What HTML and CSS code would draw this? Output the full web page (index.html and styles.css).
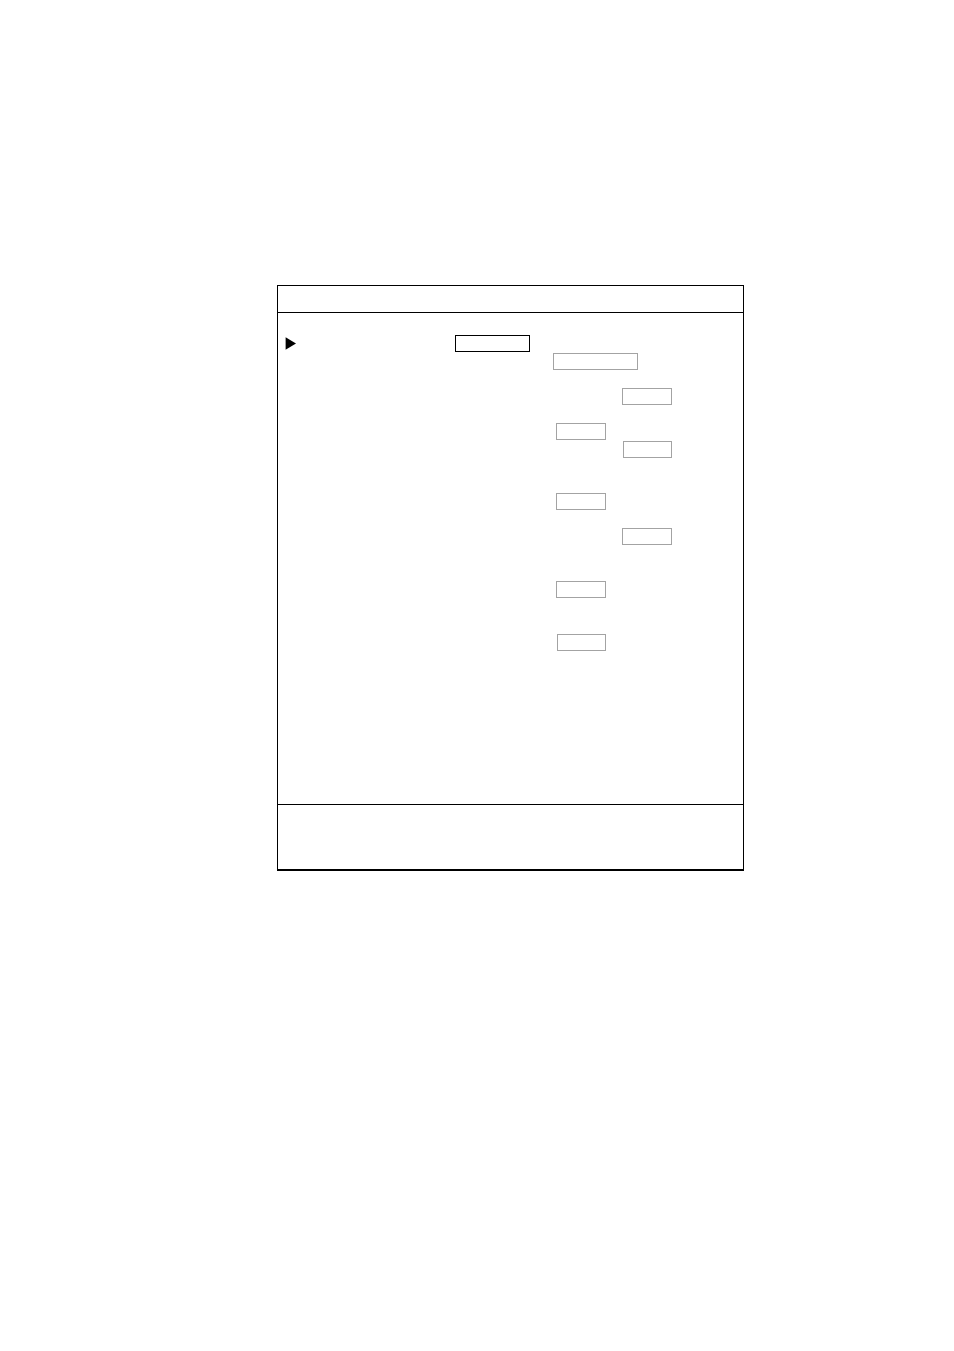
FILE: index.html
```html
<!DOCTYPE html>
<html lang="en">
<head>
<meta charset="utf-8">
<meta name="viewport" content="width=device-width, initial-scale=1">
<title>Menu</title>
<link rel="stylesheet" href="styles.css">
</head>
<body>
<main class="page">
  <form class="panel">
    <header class="panel-header"></header>
    <div class="panel-body">
      <div class="row row-active">
        <svg class="cursor" viewBox="0 0 12 13" aria-hidden="true"><path d="M0.6 0.3 L11 6.5 L0.6 12.7 Z"/></svg>
        <input class="field field-active" type="text" aria-label="Field 1">
      </div>
      <div class="row row-wide gap-tight"><input class="field" type="text" aria-label="Field 2"></div>
      <div class="row gap-line"><input class="field field-outer" type="text" aria-label="Field 3"></div>
      <div class="row gap-line"><input class="field field-inner" type="text" aria-label="Field 4"></div>
      <div class="row gap-tight"><input class="field field-outer field-short" type="text" aria-label="Field 5"></div>
      <div class="row gap-double"><input class="field field-inner" type="text" aria-label="Field 6"></div>
      <div class="row gap-line"><input class="field field-outer" type="text" aria-label="Field 7"></div>
      <div class="row gap-section"><input class="field field-inner" type="text" aria-label="Field 8"></div>
      <div class="row gap-section"><input class="field field-inner field-short" type="text" aria-label="Field 9"></div>
    </div>
    <footer class="panel-footer"></footer>
  </form>
</main>
</body>
</html>
```
FILE: styles.css
```css
* {
  box-sizing: border-box;
}

body {
  margin: 0;
  background: #fff;
  font-family: "Liberation Sans", Arial, sans-serif;
  font-size: 12px;
}

.page {
  padding: 285px 210px 285px 277px;
}

.panel {
  border: 1px solid #000;
  border-bottom-width: 2px;
}

.panel-header {
  min-height: 27px;
  border-bottom: 1px solid #000;
}

.panel-body {
  padding: 22px 0 153px;
}

.panel-footer {
  min-height: 65px;
  border-top: 1px solid #000;
}

.row {
  display: grid;
  grid-template-columns: 278px 50px 16px 50px;
  min-height: 17px;
}

.row-active {
  grid-template-columns: 12px 75px;
  column-gap: 158px;
  padding-left: 7px;
  align-items: center;
}

.row-wide {
  grid-template-columns: 85px;
  padding-left: 275px;
}

.gap-tight {
  margin-top: 1px;
}

.gap-line {
  margin-top: 18px;
}

.gap-double {
  margin-top: 35px;
}

.gap-section {
  margin-top: 36px;
}

.cursor {
  display: block;
  width: 12px;
  height: 13px;
  fill: #000;
}

.field {
  width: 100%;
  height: 17px;
  margin: 0;
  padding: 0 3px;
  border: 1px solid #a3a3a3;
  border-radius: 0;
  background: #fff;
  font: inherit;
}

.field-active {
  border-color: #000;
}

.field-inner {
  grid-column: 2;
}

.field-outer {
  grid-column: 4;
}

.field-short {
  width: 49px;
  justify-self: end;
}
```
